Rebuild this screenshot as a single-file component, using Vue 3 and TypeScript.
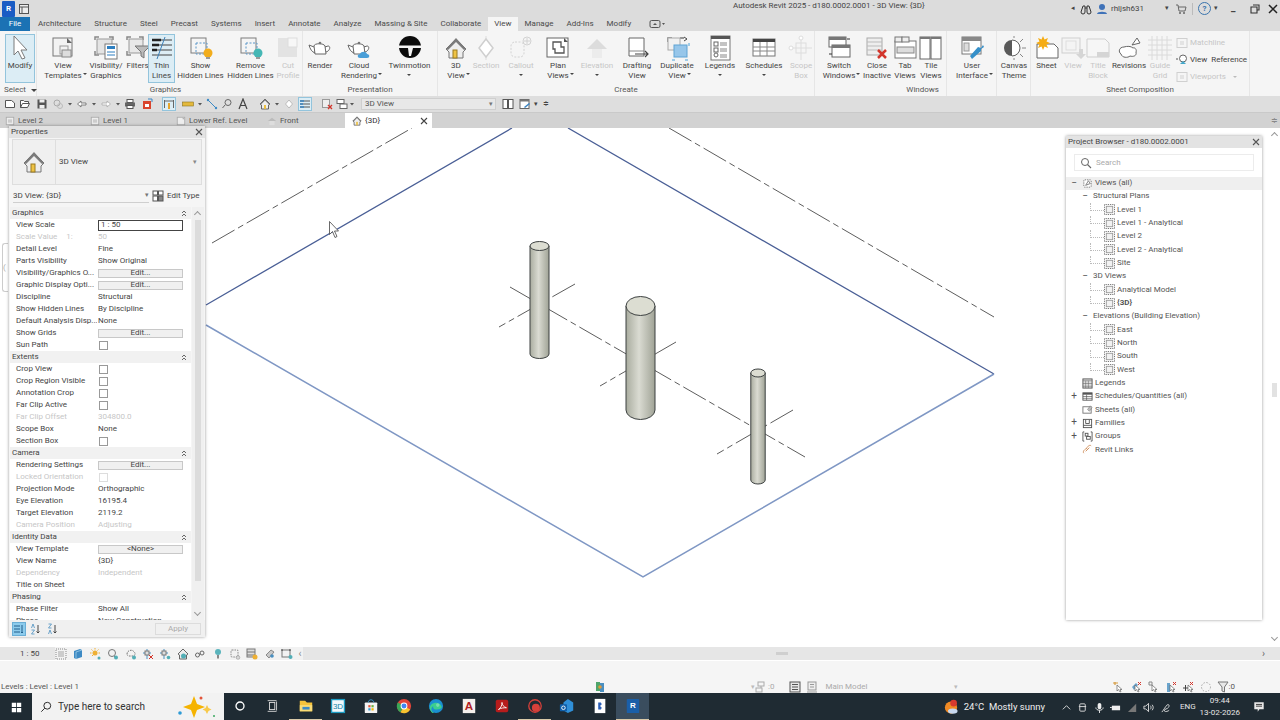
<template>
  <div class="app">
    <header class="title-bar">
      <div class="app-btn">R</div>
      <svg class="qi doc-ic" viewBox="0 0 12 12" v-html="smallIcons.recent"></svg>
      <span class="title">Autodesk Revit 2025 - d180.0002.0001 - 3D View: {3D}</span>
      <div class="title-right">
        <span class="tiny-left">◂</span>
        <svg class="qi" style="margin-left: 5px" viewBox="0 0 12 12" v-html="smallIcons.binoculars"></svg>
        <svg class="qi" style="margin-left: 4px" viewBox="0 0 12 12" v-html="smallIcons.user"></svg>
        <span class="user">rhljsh631</span>
        <span class="tiny-down">▾</span>
        <svg class="qi" style="margin-left: 6px" viewBox="0 0 12 12" v-html="smallIcons.cart"></svg>
        <i class="title-sep"></i>
        <span class="help">?</span>
        <span class="tiny-down help-caret">▾</span>
        <span class="win-btn">_</span>
        <svg class="win-ic" viewBox="0 0 12 12"><path d="M4 2h6v5H8M2 4h6v6H2z" fill="none" stroke="#333" stroke-width="1.1" /></svg>
        <svg class="win-ic" viewBox="0 0 12 12"><path d="M2 2l8 8M10 2l-8 8" stroke="#222" stroke-width="1.5" /></svg>
      </div>
    </header>

    <nav class="menu-bar">
      <span class="menu-file">File</span>
      <span v-for="m in menus" :key="m" class="menu-item" :class="{ active: m === 'View' }">{{ m }}</span>
      <svg class="menu-ic" viewBox="0 0 16 10"><rect x="1" y="1.5" width="10" height="7" rx="1.5" fill="none" stroke="#555" /><path d="M4 6l2-2 2 2z" fill="#555" /><path d="M13 4h3l-1.5 2z" fill="#555" /></svg>
    </nav>

    <section class="ribbon">
      <div v-for="g in groups" :key="g.name + g.width" class="group" :style="{ width: g.width + 'px' }">
        <div class="tools" :style="{ paddingLeft: (g.inset ?? 0) + 'px' }">
          <div
            v-for="t in g.tools"
            :key="t.label.join()"
            class="tool"
            :class="{ off: t.off, on: t.on }"
            :style="{ width: t.width + 'px' }"
          >
            <svg class="tool-ic" viewBox="0 0 26 26" v-html="icons[t.icon]"></svg>
            <div class="tool-label">
              <span v-for="(line, i) in t.label" :key="i">{{ line }}<i v-if="t.side && i === t.label.length - 1" class="caret side"></i></span>
              <i v-if="t.below" class="caret below"></i>
            </div>
          </div>
          <div v-if="g.side" class="side-col">
            <div class="side-row off"><svg class="qi" viewBox="0 0 12 12" v-html="smallIcons.match"></svg>Matchline</div>
            <div class="side-row"><svg class="qi" viewBox="0 0 12 12" v-html="smallIcons.viewref"></svg>View&nbsp; Reference</div>
            <div class="side-row off"><svg class="qi" viewBox="0 0 12 12" v-html="smallIcons.match"></svg>Viewports<i class="caret side-inline"></i></div>
          </div>
        </div>
        <div class="group-label" :class="{ end: g.end, launch: g.launch }">
          {{ g.name }}<i v-if="g.caret" class="caret select-caret"></i>
        </div>
      </div>
    </section>

    <div class="qat">
      <template v-for="q in qat" :key="q.x">
        <svg class="qi" :class="{ 'qi-on': q.on }" :style="{ marginLeft: q.gap + 'px' }" viewBox="0 0 12 12" v-html="smallIcons[q.icon]"></svg>
      </template>
      <div class="qat-combo">3D View<span class="combo-arrow">▾</span></div>
      <svg class="qi" style="margin-left: 6px" viewBox="0 0 12 12" v-html="smallIcons.split"></svg>
      <svg class="qi" style="margin-left: 5px" viewBox="0 0 12 12" v-html="smallIcons.table"></svg>
      <span class="tiny-down qat-caret">▾</span>
      <span class="tiny-down qat-more">≑</span>
    </div>

    <div class="view-tabs">
      <div
        v-for="t in viewTabs"
        :key="t.label"
        class="view-tab"
        :class="{ active: t.active }"
        :style="{ width: t.width + 'px' }"
      >
        <svg class="tab-ic" viewBox="0 0 12 12" v-html="t.active ? smallIcons.home : smallIcons[t.icon]"></svg>
        <span>{{ t.label }}</span>
        <svg v-if="t.active" class="tab-x" viewBox="0 0 10 10"><path d="M2 2l6 6M8 2l-6 6" stroke="#444" stroke-width="1.1" /></svg>
      </div>
      <span class="tabs-more">≑</span>
    </div>

    <main class="canvas">
      <svg class="scene" viewBox="0 128 1280 517">
        <defs>
          <linearGradient id="col" x1="0" x2="1" y1="0" y2="0">
            <stop offset="0" stop-color="#a9ac9f" />
            <stop offset="0.45" stop-color="#dadbd2" />
            <stop offset="1" stop-color="#a0a396" />
          </linearGradient>
        </defs>
        <g stroke="#333" stroke-width="0.8" fill="none" stroke-dasharray="26 4 6 4">
          <path d="M212 243L412 128" />
          <path d="M669 128L994 317" />
          <path d="M510 287L805 457" />
          <path d="M575 284L499 327" />
          <path d="M676 342L600 386" />
          <path d="M793 410L717 454" />
        </g>
        <g fill="none" stroke-width="1.3">
          <path d="M206 305L512 128M568 128L994 374" stroke="#4a5f96" />
          <path d="M994 374L643 577L206 325" stroke="#7f97c4" stroke-width="1.5" />
        </g>
        <g v-for="c in columns" :key="c.x" stroke="#3c4040" stroke-width="1">
          <path :d="columnPath(c)" fill="url(#col)" />
          <ellipse :cx="c.x" :cy="c.top" :rx="c.rx" :ry="c.ry" fill="#dcddd2" />
        </g>
        <path d="M329.500 221.500v13l3-3 2.500 6 2-1-2.500-5.500h4z" fill="#fff" stroke="#444" stroke-width="0.8" />
      </svg>

      <div class="dock-tab"><span>(</span></div>

      <aside class="props">
        <div class="panel-head">
          <span>Properties</span>
          <svg class="panel-x" viewBox="0 0 10 10"><path d="M2 2l6 6M8 2l-6 6" stroke="#555" stroke-width="1.1" /></svg>
        </div>
        <div class="type-box">
          <div class="type-thumb"><svg viewBox="0 0 26 26" v-html="icons.house"></svg></div>
          <span class="type-name">3D View</span>
          <span class="type-arrow">▾</span>
        </div>
        <div class="type-row">
          <div class="type-select">3D View: {3D}<span class="type-select-arrow">▾</span></div>
          <svg class="qi" viewBox="0 0 12 12" v-html="smallIcons.editType"></svg>
          <span class="edit-type">Edit Type</span>
        </div>
        <div class="prop-body">
          <div class="prop-table">
            <template v-for="g in propGroups" :key="g.name">
              <div class="prop-group">
                {{ g.name }}
                <svg class="collapse" viewBox="0 0 6 7"><path d="M1 3l2-2 2 2M1 6l2-2 2 2" fill="none" stroke="#444" stroke-width="0.8" /></svg>
              </div>
              <div v-for="r in g.rows" :key="r.label" class="prop-row" :class="{ off: r.off }">
                <span class="prop-label">{{ r.label }}<em v-if="r.extra">{{ r.extra }}</em></span>
                <span class="prop-value">
                  <span v-if="r.kind === 'edit'" class="edit-btn">{{ r.value }}</span>
                  <span v-else-if="r.kind === 'input'" class="prop-input">{{ r.value }}</span>
                  <i v-else-if="r.kind === 'check'" class="check"></i>
                  <template v-else>{{ r.value }}</template>
                </span>
              </div>
            </template>
          </div>
          <div class="prop-scroll">
            <span class="chev up"></span>
            <i class="prop-grip"></i>
            <span class="chev down"></span>
          </div>
        </div>
        <div class="prop-foot">
          <svg class="qi qi-sel" viewBox="0 0 12 12" v-html="smallIcons.sortCat"></svg>
          <svg class="qi foot-ic" viewBox="0 0 12 12" v-html="smallIcons.sortAz"></svg>
          <svg class="qi foot-ic" viewBox="0 0 12 12" v-html="smallIcons.sortZa"></svg>
          <span class="apply">Apply</span>
        </div>
      </aside>

      <aside class="browser">
        <div class="panel-head browser-head">
          <span>Project Browser - d180.0002.0001</span>
          <svg class="panel-x" viewBox="0 0 10 10"><path d="M2 2l6 6M8 2l-6 6" stroke="#555" stroke-width="1.1" /></svg>
        </div>
        <div class="search">
          <svg viewBox="0 0 12 12"><circle cx="5" cy="5" r="3.500" fill="none" stroke="#666" /><path d="M7.500 7.500l3.500 3.500" stroke="#666" stroke-width="1.1" /></svg>
          <span>Search</span>
        </div>
        <div class="tree">
          <div v-for="n in tree" :key="n.text" class="tree-row" :class="[`lvl${n.lvl}`, { hi: n.hi, bold: n.bold }]">
            <i v-if="n.lvl === 2" class="tree-dots" :class="{ last: n.last }"></i>
            <span v-if="n.sign" class="sign">{{ n.sign }}</span>
            <svg v-if="n.icon" class="tree-ic" viewBox="0 0 12 12" v-html="smallIcons[n.icon]"></svg>
            <span class="tree-text">{{ n.text }}</span>
          </div>
        </div>
      </aside>

      <div class="v-scroll">
        <span class="chev up"></span>
        <i class="v-grip"></i>
        <span class="chev down"></span>
      </div>
    </main>

    <div class="view-bar">
      <span class="view-scale">1 : 50</span>
      <div class="view-icons">
        <svg v-for="(b, i) in viewBarIcons" :key="i" class="qi" viewBox="0 0 12 12" v-html="smallIcons[b]"></svg>
        <span class="h-arrow">‹</span>
      </div>
      <i class="h-grip"></i>
      <span class="h-right">›</span>
    </div>

    <div class="status">
      <span class="status-text">Levels : Level : Level 1</span>
      <svg class="qi status-net" viewBox="0 0 12 12" v-html="smallIcons.network"></svg>
      <div class="status-mid">
        <span class="mid-caret">▾</span>
        <svg class="qi" viewBox="0 0 12 12" v-html="smallIcons.worksets"></svg>
        <span class="count">:0</span>
        <svg class="qi mid-a" viewBox="0 0 12 12" v-html="smallIcons.list"></svg>
        <svg class="qi mid-b" viewBox="0 0 12 12" v-html="smallIcons.listOff"></svg>
        <span class="main-model">Main Model</span>
        <span class="mid-caret model-caret">▾</span>
      </div>
      <div class="status-right">
        <svg v-for="(s, i) in statusIcons" :key="i" class="qi" viewBox="0 0 12 12" v-html="smallIcons[s]"></svg>
        <span class="count filter-count">:0</span>
      </div>
    </div>

    <footer class="taskbar">
      <div class="start">
        <svg viewBox="0 0 14 14"><path d="M1 1h5.500v5.500H1zM7.500 1H13v5.500H7.500zM1 7.500h5.500V13H1zM7.500 7.500H13V13H7.500z" fill="#fff" /></svg>
      </div>
      <div class="task-search">
        <svg class="task-glass" viewBox="0 0 14 14"><circle cx="8.500" cy="5.500" r="4" fill="none" stroke="#222" stroke-width="1.1" /><path d="M5.500 8.500L1.500 12.500" stroke="#222" stroke-width="1.1" /></svg>
        <span>Type here to search</span>
        <svg class="sparkle" viewBox="0 0 40 24"><path d="M18 1l3 8 8 3-8 3-3 8-3-8-8-3 8-3z" fill="#f5b301" /><path d="M31 10l1.500 3 3 1.500-3 1.500-1.500 3-1.500-3-3-1.500 3-1.500z" fill="#f7c94b" /><circle cx="25" cy="3" r="1.500" fill="#e2543a" /><circle cx="4" cy="18" r="1.800" fill="#2e9bd6" /><circle cx="38" cy="21" r="1" fill="#3aa860" /></svg>
      </div>
      <div class="task-apps">
        <div v-for="a in taskApps" :key="a.name" class="task-app" :class="{ running: a.running, current: a.current }">
          <svg viewBox="0 0 18 18" v-html="a.svg"></svg>
        </div>
      </div>
      <div class="tray">
        <svg class="weather" viewBox="0 0 16 18"><circle cx="8" cy="9" r="7" fill="#f08a24" /><ellipse cx="10" cy="13" rx="5.500" ry="3" fill="#c8d8ee" /><circle cx="11" cy="4" r="3.800" fill="#d73a2e" /></svg>
        <span class="temp">24°C&nbsp; Mostly sunny</span>
        <svg class="tray-ic first" viewBox="0 0 12 12"><path d="M2 8l4-4 4 4" fill="none" stroke="#ddd" /></svg>
        <svg v-for="(t, i) in trayIcons" :key="i" class="tray-ic" viewBox="0 0 12 12" v-html="t"></svg>
        <span class="lang">ENG</span>
        <div class="clock"><span>09:44</span><span>13-02-2026</span></div>
        <svg class="notify" viewBox="0 0 14 14"><path d="M1.500 1.500h11v8h-5l-2 3v-3h-4z" fill="#e8e8e8" /><path d="M3.500 4h7M3.500 6h7" stroke="#222" /></svg>
      </div>
    </footer>
  </div>
</template>

<script setup lang="ts">
type Tool = {
  label: string[];
  icon: string;
  width: number;
  off?: boolean;
  on?: boolean;
  side?: boolean;
  below?: boolean;
};

type Group = {
  name: string;
  width: number;
  tools: Tool[];
  inset?: number;
  end?: boolean;
  launch?: boolean;
  caret?: boolean;
  side?: boolean;
};

type PropRow = {
  label: string;
  value?: string;
  kind?: "edit" | "input" | "check";
  off?: boolean;
  extra?: string;
};

const menus = [
  "Architecture",
  "Structure",
  "Steel",
  "Precast",
  "Systems",
  "Insert",
  "Annotate",
  "Analyze",
  "Massing & Site",
  "Collaborate",
  "View",
  "Manage",
  "Add-Ins",
  "Modify",
];

const frame = (x: number, y: number, w: number, h: number, c = "#7d7d7d") =>
  `<rect x="${x}" y="${y}" width="${w}" height="${h}" fill="none" stroke="${c}"/>`;
const teapot =
  '<path d="M7 11c0-3 10-3 11 0l1 8H8zM7 12L2 10c1 4 3 7 6 8M18 12l3-1c3 0 2 5-2 6" fill="#fff" stroke="#666"/><circle cx="13" cy="8" r="1.300" fill="#777"/>';

const icons: Record<string, string> = {
  modify: '<path d="M7 1v19l4-4 4 8 3-1-4-8h6z" fill="#fff" stroke="#7a7a7a"/>',
  templates: `<rect x="3" y="3" width="19" height="18" fill="#f2f2f2" stroke="#777"/><path d="M17 3l5 5h-5z" fill="#666"/>${frame(10, 11, 8, 8, "#999")}<rect x="12" y="15" width="9" height="7" fill="#ddd" stroke="#888"/>`,
  visibility: `<path d="M2 5V2h4M16 2h4v3M2 16v4h4" fill="none" stroke="#888" stroke-width="1.500"/><rect x="4" y="4" width="15" height="15" fill="#e4e4e4" stroke="#999"/><rect x="12" y="9" width="12" height="15" fill="#fff" stroke="#777"/><rect x="14" y="11" width="8" height="3" fill="#2d7fc1"/><path d="M14 17h8M14 20h8" stroke="#2d7fc1"/>`,
  filters: `<path d="M2 5V2h4M14 2h4v3M2 16v4h4" fill="none" stroke="#888" stroke-width="1.500"/><rect x="4" y="4" width="14" height="14" fill="#e8e8e8" stroke="#999"/><path d="M10 11h15l-6 6v6l-3-2v-4z" fill="#bbb" stroke="#777"/>`,
  thin: '<path d="M3 5h20M3 10h20M3 15h20M3 20h20" stroke="#444" stroke-width="1.200"/><path d="M3 5h9M3 10h7M3 15h5" stroke="#222" stroke-width="2.500"/><path d="M16 2L8 24" stroke="#3b80b8"/>',
  showHidden: `${frame(3, 3, 15, 15)}<rect x="8" y="8" width="11" height="11" fill="none" stroke="#5a96c8" stroke-dasharray="2 1.500"/><circle cx="20" cy="18" r="4.500" fill="#f2ad1c"/><rect x="18" y="22" width="4" height="2" fill="#999"/>`,
  removeHidden: `${frame(3, 3, 15, 15)}<rect x="8" y="8" width="11" height="11" fill="none" stroke="#5a96c8" stroke-dasharray="2 1.500"/><circle cx="20" cy="18" r="4.500" fill="#45b7b5"/><rect x="18" y="22" width="4" height="2" fill="#999"/>`,
  cut: '<rect x="3" y="3" width="19" height="19" fill="#e3e3e3"/><rect x="13" y="3" width="9" height="9" fill="#f7f7f7" stroke="#ddd"/>',
  render: teapot,
  cloud: `${teapot}<path d="M14 23c-3 0-3-4 0-4 1-3 6-3 7 0 3 0 3 4 0 4z" fill="#4a9fd8"/>`,
  twin: '<circle cx="13" cy="12" r="11" fill="#0c0c0c"/><path d="M2 10.500h22v2.500H16l-2 8h-2l-1-8H2z" fill="#f5f5f5"/>',
  house: '<path d="M3 14L13 4l10 10-3 3v6H6v-6z" fill="#eee" stroke="#777"/><path d="M3 14L13 3l10 11-2 1-8-8-8 8z" fill="#7b7b7b"/><rect x="10" y="15" width="4" height="8" fill="#efc344" stroke="#9a7a20"/>',
  section: '<path d="M13 1v24" stroke="#ddd"/><path d="M13 4l7 9-7 9-7-9z" fill="#fff" stroke="#cfcfcf" stroke-width="1.500"/>',
  callout: '<rect x="3" y="7" width="13" height="15" rx="4" fill="none" stroke="#d2d2d2" stroke-dasharray="2 1.500"/><circle cx="19" cy="6" r="4" fill="none" stroke="#d2d2d2"/><path d="M19 3v6M16 6h6" stroke="#d2d2d2"/>',
  plan: '<rect x="2" y="3" width="21" height="19" fill="#fff" stroke="#666"/><path d="M19 3l4 4h-4z" fill="#555"/><path d="M8 7h8v5h3v6H10v-4H8z" fill="none" stroke="#555" stroke-width="1.300"/>',
  elevation: '<path d="M3 14L13 4l10 10z" fill="#dcdcdc"/><rect x="8" y="14" width="10" height="9" fill="#ececec"/>',
  drafting: '<path d="M5 3h15v18H5z" fill="#fff" stroke="#666"/><path d="M5 16h15" stroke="#888"/><path d="M11 19h13M21 16l3 3-3 3" fill="none" stroke="#444" stroke-width="1.200"/>',
  duplicate: '<path d="M4 7V3h4M16 3h4" fill="none" stroke="#777" stroke-width="1.500"/><rect x="4" y="3" width="12" height="12" fill="#f1f1f1" stroke="#aaa"/><rect x="10" y="10" width="13" height="12" fill="#96c6ea" stroke="#5fa3d4"/><path d="M8 25h3M21 25h3M25 8v3" stroke="#4da3d9"/><path d="M20 2l3 2-3 2" fill="none" stroke="#444"/>',
  legends: '<rect x="4" y="1" width="19" height="24" fill="#fff" stroke="#777"/><rect x="4" y="1" width="19" height="3" fill="#555"/><rect x="7" y="7" width="4" height="4" fill="none" stroke="#666"/><rect x="7" y="13" width="4" height="4" fill="none" stroke="#666"/><circle cx="9" cy="20" r="2" fill="none" stroke="#666"/><path d="M13 8h7M13 10h7M13 14h7M13 16h7M13 20h7M13 22h7" stroke="#888"/>',
  schedules: '<rect x="2" y="4" width="22" height="17" fill="#fff" stroke="#777"/><rect x="2" y="4" width="22" height="3" fill="#444"/><path d="M2 12h22M2 16h22M9 7v14M16 7v14" stroke="#888"/>',
  scope: '<path d="M13 1v24M2 13h22" stroke="#ddd"/><circle cx="13" cy="3" r="2" fill="#fff" stroke="#ddd"/><circle cx="3" cy="13" r="2" fill="#fff" stroke="#ddd"/><rect x="8" y="8" width="10" height="10" fill="none" stroke="#ddd"/>',
  switchWin: '<rect x="3" y="2" width="17" height="10" fill="#fff" stroke="#666"/><rect x="3" y="2" width="17" height="3" fill="#777"/><rect x="6" y="10" width="18" height="12" fill="#fff" stroke="#666"/><rect x="6" y="10" width="18" height="3" fill="#777"/><path d="M21 4h3M3 19h3" stroke="#333"/>',
  close: '<rect x="3" y="3" width="15" height="17" fill="#eee" stroke="#aaa"/><path d="M3 7h15M3 11h15M3 15h15" stroke="#bbb"/><path d="M14 15l8 8M22 15l-8 8" stroke="#d2352b" stroke-width="2.500"/>',
  tab: '<rect x="3" y="6" width="21" height="17" fill="#fff" stroke="#777"/><rect x="3" y="2" width="7" height="5" fill="#eee" stroke="#777"/><rect x="10" y="2" width="7" height="5" fill="#eee" stroke="#777"/><rect x="5" y="12" width="17" height="6" fill="#ddd" stroke="#888"/>',
  tile: '<rect x="2" y="2" width="10" height="22" fill="#fff" stroke="#666"/><rect x="13" y="2" width="10" height="22" fill="#fff" stroke="#666"/><rect x="2" y="2" width="10" height="2" fill="#777"/><rect x="13" y="2" width="10" height="2" fill="#777"/>',
  ui: '<rect x="3" y="2" width="19" height="17" fill="#fff" stroke="#777"/><rect x="3" y="2" width="19" height="4" fill="#888"/><rect x="5" y="8" width="5" height="8" fill="#ddd" stroke="#999"/><path d="M24 10l-2 3-3-1-8 9 2 3 9-8 0-2 3-2z" fill="#3690c9"/>',
  canvasTheme: '<circle cx="11" cy="13" r="8" fill="#595959"/><path d="M11 5a8 8 0 010 16" fill="#fff" stroke="#666"/><path d="M21 13h4M19 7l3-3M19 19l3 3M13 1v2M13 23v2" stroke="#888"/>',
  sheet: '<path d="M3 9h17l4 4v10H3z" fill="#fff" stroke="#666"/><path d="M9 1l1.500 3.500L14 3l-1.500 3.500L16 8l-3.500 1.500L14 13l-3.500-1.500L9 15l-1.500-3.500L4 13l1.500-3.500L2 8l3.500-1.500L4 3l3.500 1.500z" fill="#f5ac13"/>',
  viewOff: '<rect x="2" y="3" width="18" height="15" fill="#f4f4f4" stroke="#cfcfcf"/><rect x="6" y="6" width="10" height="9" fill="none" stroke="#ddd"/><path d="M19 14v5h-3l5 5 5-5h-3v-5z" fill="#d5d5d5"/>',
  titleBlock: '<path d="M2 4h18l4 4v14H2z" fill="#f6f6f6" stroke="#cfcfcf"/><rect x="12" y="17" width="12" height="5" fill="#d5d5d5"/>',
  revisions: '<path d="M8 12c-5 0-6 5-3 7 1 4 7 4 9 2 3 1 7 0 6-4 1-2-1-5-3-4-2-2-6-2-9-1z" fill="#fff" stroke="#666"/><path d="M16 10l5-7 3 5z" fill="#fff" stroke="#666"/>',
  grid: '<path d="M5 1v24M10 1v24M15 1v24M20 1v24M1 5h24M1 10h24M1 15h24M1 20h24" stroke="#dadada"/>',
};

const groups: Group[] = [
  {
    name: "Select",
    width: 37,
    inset: 5,
    caret: true,
    tools: [{ label: ["Modify"], icon: "modify", width: 30, on: true }],
  },
  {
    name: "Graphics",
    width: 266,
    inset: 4,
    launch: true,
    tools: [
      { label: ["View", "Templates"], icon: "templates", width: 44, side: true },
      { label: ["Visibility/", "Graphics"], icon: "visibility", width: 42 },
      { label: ["Filters"], icon: "filters", width: 21 },
      { label: ["Thin", "Lines"], icon: "thin", width: 27, on: true },
      { label: ["Show", "Hidden Lines"], icon: "showHidden", width: 51 },
      { label: ["Remove", "Hidden Lines"], icon: "removeHidden", width: 49 },
      { label: ["Cut", "Profile"], icon: "cut", width: 26, off: true },
    ],
  },
  {
    name: "Presentation",
    width: 135,
    tools: [
      { label: ["Render"], icon: "render", width: 34 },
      { label: ["Cloud", "Rendering"], icon: "cloud", width: 44, side: true },
      { label: ["Twinmotion"], icon: "twin", width: 57, below: true },
    ],
  },
  {
    name: "Create",
    width: 377,
    tools: [
      { label: ["3D", "View"], icon: "house", width: 36, side: true },
      { label: ["Section"], icon: "section", width: 24, off: true },
      { label: ["Callout"], icon: "callout", width: 46, off: true, below: true },
      { label: ["Plan", "Views"], icon: "plan", width: 28, side: true },
      { label: ["Elevation"], icon: "elevation", width: 50, off: true, below: true },
      { label: ["Drafting", "View"], icon: "drafting", width: 30 },
      { label: ["Duplicate", "View"], icon: "duplicate", width: 50, side: true },
      { label: ["Legends"], icon: "legends", width: 36, below: true },
      { label: ["Schedules"], icon: "schedules", width: 52, below: true },
      { label: ["Scope", "Box"], icon: "scope", width: 22, off: true },
    ],
  },
  {
    name: "Windows",
    width: 132,
    end: true,
    tools: [
      { label: ["Switch", "Windows"], icon: "switchWin", width: 48, side: true },
      { label: ["Close", "Inactive"], icon: "close", width: 28 },
      { label: ["Tab", "Views"], icon: "tab", width: 28 },
      { label: ["Tile", "Views"], icon: "tile", width: 24 },
    ],
  },
  {
    name: "",
    width: 50,
    tools: [{ label: ["User", "Interface"], icon: "ui", width: 50, side: true }],
  },
  {
    name: " ",
    width: 34,
    tools: [{ label: ["Canvas", "Theme"], icon: "canvasTheme", width: 34 }],
  },
  {
    name: "Sheet Composition",
    width: 219,
    side: true,
    tools: [
      { label: ["Sheet"], icon: "sheet", width: 31 },
      { label: ["View"], icon: "viewOff", width: 22, off: true },
      { label: ["Title", "Block"], icon: "titleBlock", width: 28, off: true },
      { label: ["Revisions"], icon: "revisions", width: 34 },
      { label: ["Guide", "Grid"], icon: "grid", width: 28, off: true },
    ],
  },
];

const smallIcons: Record<string, string> = {
  recent: '<rect x="1.500" y="1.500" width="9" height="9" fill="#eee" stroke="#555"/><path d="M1.500 4h9M4 4v6.500" stroke="#555"/>',
  binoculars: '<path d="M1 9a2 2 0 004 0V3H3zM7 3v6a2 2 0 004 0L9 3zM5 5h2" fill="none" stroke="#333"/>',
  user: '<circle cx="6" cy="4" r="3" fill="#3f72b8"/><path d="M1 11c0-3 10-3 10 0z" fill="#3f72b8"/>',
  cart: '<path d="M1 2h2l1 6h6l1-4H3.500" fill="none" stroke="#666"/><circle cx="5" cy="10" r="1" fill="#666"/><circle cx="9" cy="10" r="1" fill="#666"/>',
  match: '<rect x="1" y="1.500" width="10" height="9" fill="none" stroke="#d0d0d0"/><path d="M4 4h4v4H4z" fill="#e3e3e3"/>',
  viewref: '<circle cx="7" cy="4.500" r="3.500" fill="#fff" stroke="#666"/><path d="M4 10l3-3 3 3z" fill="#45a7c9"/><path d="M0 5h2" stroke="#555"/>',
  new: '<path d="M1.500 2.500h6l3 2.500v4.500h-9z" fill="#fff" stroke="#555"/>',
  open: '<path d="M1.500 9.500v-7h3l1 1h4v2M1.500 9.500l2-4h7l-2 4z" fill="#fff" stroke="#555"/>',
  save: '<path d="M1.500 1.500h8l1 1v8h-9z" fill="#555"/><rect x="3.500" y="1.500" width="5" height="3" fill="#eee"/><rect x="3.500" y="7" width="5" height="3.500" fill="#eee"/>',
  sync: '<circle cx="5" cy="5" r="3" fill="none" stroke="#aaa"/><circle cx="8" cy="8" r="2.500" fill="none" stroke="#bbb"/>',
  caret: '<path d="M4 5h4L6 7.500z" fill="#555"/>',
  undo: '<path d="M1.500 6l3.500-3v2h5v2H5v2z" fill="#fff" stroke="#666" stroke-width="0.800"/>',
  redo: '<path d="M10.500 6L7 3v2H2v2h5v2z" fill="#fff" stroke="#aaa" stroke-width="0.800"/>',
  print: '<rect x="3" y="1.500" width="6" height="3" fill="#fff" stroke="#555"/><rect x="1" y="4.500" width="10" height="4" fill="#666"/><rect x="3" y="7.500" width="6" height="3" fill="#fff" stroke="#555"/>',
  sheetRed: '<rect x="2" y="3" width="8" height="8" fill="#d9452d"/><rect x="4" y="6" width="4" height="3" fill="#fff"/><path d="M7 1h4v3" fill="none" stroke="#3b86c4"/>',
  thinSel: '<path d="M1.500 2v8M10.500 2v8M1.500 3h9" stroke="#666"/><path d="M6 5v6" stroke="#e8a52c" stroke-width="2"/>',
  measure: '<rect x="0.500" y="4" width="11" height="4" fill="#e4b93c" stroke="#8a7220" stroke-width="0.600"/>',
  align: '<path d="M2 2l8 8" stroke="#3d8ac4"/><circle cx="2" cy="2" r="1.200" fill="#3d8ac4"/><circle cx="10" cy="10" r="1.200" fill="#3d8ac4"/>',
  tag: '<circle cx="7" cy="4.500" r="3" fill="none" stroke="#666"/><path d="M4 7l-2.500 3" stroke="#666"/>',
  textA: '<path d="M2 11L6 1l4 10M3.500 7.500h5" fill="none" stroke="#444" stroke-width="1.200"/>',
  home: '<path d="M1 6l5-5 5 5-1.500 1V11h-7V7z" fill="#eee" stroke="#666"/><path d="M1 6l5-5 5 5-1 .5-4-4-4 4z" fill="#777"/><rect x="5" y="7" width="2" height="4" fill="#ebc043"/>',
  section: '<path d="M6 2l3.500 4L6 10 2.500 6z" fill="#fff" stroke="#bbb"/>',
  thinOn: '<path d="M1 3h10M1 6h10M1 9h10" stroke="#555"/><path d="M1 3h4M1 6h3M1 9h4" stroke="#3b86c4" stroke-width="1.500"/>',
  closeHidden: '<rect x="1.500" y="1.500" width="7" height="8" fill="#eee" stroke="#999"/><path d="M7 7l4 4M11 7l-4 4" stroke="#d2352b" stroke-width="1.300"/>',
  switchSmall: '<rect x="1" y="1.500" width="7" height="4" fill="#fff" stroke="#666"/><rect x="4" y="6" width="7" height="4.500" fill="#fff" stroke="#666"/>',
  split: '<rect x="1" y="1.500" width="4.500" height="9" fill="#fff" stroke="#555"/><rect x="6.500" y="1.500" width="4.500" height="9" fill="#fff" stroke="#555"/>',
  table: '<rect x="1" y="1.500" width="9" height="9" fill="#fff" stroke="#666"/><rect x="1" y="1.500" width="9" height="2" fill="#777"/><path d="M5 9l5-4 1 1-5 4z" fill="#3b86c4"/>',
  plan: '<rect x="1.500" y="1.500" width="9" height="9" fill="#eee" stroke="#aaa"/><path d="M3.500 4h5v4h-5z" fill="#ccc"/>',
  lowerRef: '<rect x="1.500" y="1.500" width="9" height="9" fill="#eee" stroke="#aaa"/><path d="M8 1.500l2.500 2.500H8z" fill="#aaa"/>',
  front: '<path d="M1 6l5-4 5 4z" fill="#bbb"/><rect x="3" y="6" width="6" height="5" fill="#ddd"/>',
  editType: '<rect x="1" y="1" width="4.500" height="4" fill="#fff" stroke="#555"/><rect x="6.500" y="1" width="4.500" height="4" fill="#fff" stroke="#555"/><rect x="1" y="6" width="4.500" height="5" fill="#fff" stroke="#555"/><rect x="6.500" y="6" width="4.500" height="5" fill="#888" stroke="#555"/>',
  sortCat: '<path d="M1 3h6M1 6h6M1 9h6" stroke="#225f8c"/><path d="M9 2v8M8 9l1 1 1-1" fill="none" stroke="#225f8c"/>',
  sortAz: '<path d="M1.500 5l1.500-4 1.500 4M1.500 7h3l-3 4h3" fill="none" stroke="#4a8fc0" stroke-width="0.800"/><path d="M8 2v8M6.500 8.500L8 10l1.500-1.500" fill="none" stroke="#444"/>',
  sortZa: '<path d="M1.500 1h3l-3 4h3M1.500 11l1.500-4 1.500 4" fill="none" stroke="#4a8fc0" stroke-width="0.800"/><path d="M8 2v8M6.500 8.500L8 10l1.500-1.500" fill="none" stroke="#444"/>',
  views: '<rect x="2" y="2" width="8" height="8" rx="1" fill="#fff" stroke="#777" stroke-dasharray="1.500 1"/><path d="M4 8l3-5 2 3z" fill="none" stroke="#777"/>',
  thumb: '<rect x="0.500" y="0.500" width="11" height="11" fill="#fff" stroke="#555" stroke-dasharray="1 1"/><rect x="2.500" y="2.500" width="7" height="7" fill="#f2f2f2" stroke="#999"/>',
  legends: '<rect x="1" y="1" width="10" height="10" fill="#ddd" stroke="#555"/><path d="M1 3h10M4 3v8M7 3v8M1 6h10M1 9h10" stroke="#666" stroke-width="0.600"/>',
  schedules: '<rect x="1" y="2" width="10" height="8" fill="#fff" stroke="#555"/><rect x="1" y="2" width="10" height="2" fill="#555"/><path d="M1 6h10M1 8h10M5 4v6" stroke="#555" stroke-width="0.700"/>',
  sheets: '<rect x="1" y="3" width="9" height="7" fill="#fff" stroke="#777"/><path d="M6 6l3-4 2 2-3 4z" fill="#bbb" stroke="#666" stroke-width="0.500"/>',
  families: '<rect x="1.500" y="1.500" width="9" height="9" fill="#fff" stroke="#555"/><path d="M4 2v4h4V2M1.500 8h9" fill="none" stroke="#555"/>',
  groups: '<path d="M2.500 1H1v10h1.500M9.500 1H11v10H9.500" fill="none" stroke="#555"/><rect x="3.500" y="2.500" width="3" height="3" fill="none" stroke="#555"/><rect x="5" y="6" width="4" height="3" fill="none" stroke="#555"/>',
  link: '<path d="M2 10c-2-2 2-5 3-5l1 1M10 2C8 0 5 4 5 5l1 1M4 8l4-4" fill="none" stroke="#cf8c58"/>',
  crop: '<rect x="1" y="1" width="10" height="10" fill="none" stroke="#888" stroke-dasharray="1 1"/><rect x="3" y="3" width="6" height="6" fill="#ccc"/>',
  cube: '<path d="M2 3l6-2 2 1v7l-6 2-2-1z" fill="#3d8ac4"/><path d="M4 4v7M4 4l6-2" stroke="#bfe0f2" stroke-width="0.600"/>',
  sun: '<circle cx="5" cy="5" r="2.500" fill="#eeb034"/><path d="M5 0v1.500M0 5h1.500M8.500 5H10M1.500 1.500l1 1M8.500 1.500l-1 1M2 8l1-1" stroke="#eeb034"/><circle cx="9" cy="10" r="1.500" fill="#52aeb6"/>',
  lens: '<circle cx="5" cy="5" r="3.500" fill="none" stroke="#777"/><path d="M7 8l2 2" stroke="#777"/><circle cx="9" cy="9.500" r="2" fill="#52aeb6"/>',
  cloudCrop: '<path d="M2 6c0-4 6-5 7-2 2 1 1 4-1 4H4C3 8 2 7 2 6z" fill="none" stroke="#777" stroke-dasharray="1.500 1"/><circle cx="9" cy="9.500" r="2" fill="#52aeb6"/>',
  unlockX: '<path d="M5 1v10M1 5h8" stroke="#4a8fc0"/><rect x="3" y="3" width="4" height="4" fill="#ddd" stroke="#777"/><path d="M7 7l4 4M11 7l-4 4" stroke="#d2352b"/>',
  unlockA: '<path d="M5 1v10M1 5h8" stroke="#4a8fc0"/><rect x="3" y="3" width="4" height="4" fill="#ddd" stroke="#777"/><circle cx="9.500" cy="9.500" r="1.800" fill="#52aeb6"/>',
  homeTeal: '<path d="M1 6l5-5 5 5-1.500 1V11h-7V7z" fill="#eee" stroke="#666"/><circle cx="6.500" cy="8" r="2.500" fill="#52aeb6"/>',
  glasses: '<circle cx="3.500" cy="7" r="2" fill="none" stroke="#666"/><circle cx="8" cy="5" r="2" fill="none" stroke="#666"/><path d="M5.500 6l1-.5" stroke="#666"/>',
  bulb: '<circle cx="6" cy="4" r="3" fill="#5ab4bc"/><rect x="5" y="7" width="2" height="3.500" fill="#888"/>',
  hidden: '<rect x="2" y="2" width="7" height="7" rx="1" fill="none" stroke="#888" stroke-dasharray="1.500 1"/><circle cx="9" cy="9.500" r="1.800" fill="#d8d8d8" stroke="#888" stroke-width="0.500"/>',
  analytic: '<rect x="1" y="1" width="8" height="8" fill="#ddd" stroke="#777"/><path d="M1 4h8M1 7h8" stroke="#777"/><circle cx="9" cy="9" r="2.500" fill="#eeb034"/>',
  pipes: '<path d="M2 7l5-5 3 2-5 6z" fill="#c8c8c8" stroke="#666" stroke-width="0.700"/><circle cx="8" cy="8" r="1.800" fill="#4a8fc0"/>',
  frameTeal: '<rect x="1" y="2" width="8" height="7" fill="none" stroke="#777"/><path d="M1 1v2M9 1v2" stroke="#444"/><circle cx="9.500" cy="9" r="2" fill="#52aeb6"/>',
  network: '<rect x="2" y="1" width="4" height="9" fill="#4fa56b"/><rect x="6" y="2" width="4" height="9" fill="#4a8fc0"/><circle cx="6" cy="6" r="1.800" fill="#e29a3a"/>',
  worksets: '<rect x="3" y="1" width="6" height="4" fill="none" stroke="#aaa"/><rect x="1" y="7" width="6" height="4" fill="none" stroke="#aaa"/><path d="M6 5v2" stroke="#aaa"/>',
  list: '<rect x="1" y="1" width="10" height="10" fill="#e8e8e8" stroke="#555"/><path d="M3 3.500h6M3 6h6M3 8.500h6" stroke="#555"/>',
  listOff: '<rect x="2" y="1" width="8" height="8" fill="#eee" stroke="#999"/><path d="M4 3.500h4M4 6h4M1 11h10" stroke="#999"/>',
  pick1: '<path d="M1 2h5M3 1v3" stroke="#d59b40" stroke-width="1.200"/><path d="M5 4v6l1.500-1.500L8 11l1-.5-1-2h2z" fill="#fff" stroke="#666" stroke-width="0.700"/>',
  pick2: '<path d="M2 6l4-4 2 2-4 5z" fill="#6aa4cc"/><path d="M5 4v6l1.500-1.500L8 11l1-.5-1-2h2z" fill="#fff" stroke="#666" stroke-width="0.700"/><path d="M8 1l3 3M11 1L8 4" stroke="#d2352b"/>',
  pick3: '<path d="M2 1h3v3H2z" fill="none" stroke="#888"/><path d="M5 4v6l1.500-1.500L8 11l1-.5-1-2h2z" fill="#fff" stroke="#666" stroke-width="0.700"/>',
  pick4: '<rect x="2" y="2" width="3" height="9" fill="#6aa4cc"/><path d="M5 4v6l1.500-1.500L8 11l1-.5-1-2h2z" fill="#fff" stroke="#666" stroke-width="0.700"/><path d="M8 1l3 3M11 1L8 4" stroke="#d2352b"/>',
  pick5: '<path d="M1 7h5M3.500 4v6" stroke="#444"/><path d="M6 4v6l1.500-1.500L9 11l1-.5-1-2h2z" fill="#fff" stroke="#666" stroke-width="0.700"/><path d="M8 1l3 3M11 1L8 4" stroke="#d2352b"/>',
  ring: '<circle cx="6" cy="6" r="4.500" fill="none" stroke="#aaa" stroke-dasharray="1.500 1.500"/>',
  filter: '<path d="M1 1h10L7.500 6v5L5 10V6z" fill="#e8e8e8" stroke="#777"/>',
};

const qat = [
  { x: 1, icon: "new", gap: 4 },
  { x: 2, icon: "open", gap: 3 },
  { x: 3, icon: "save", gap: 5 },
  { x: 4, icon: "sync", gap: 4 },
  { x: 5, icon: "caret", gap: 0 },
  { x: 6, icon: "undo", gap: 0 },
  { x: 7, icon: "caret", gap: 0 },
  { x: 8, icon: "redo", gap: 0 },
  { x: 9, icon: "caret", gap: 0 },
  { x: 10, icon: "print", gap: 0 },
  { x: 11, icon: "sheetRed", gap: 5 },
  { x: 12, icon: "thinSel", gap: 10, on: true },
  { x: 13, icon: "measure", gap: 7 },
  { x: 14, icon: "caret", gap: 0 },
  { x: 15, icon: "align", gap: 0 },
  { x: 16, icon: "tag", gap: 3 },
  { x: 17, icon: "textA", gap: 4 },
  { x: 18, icon: "home", gap: 10 },
  { x: 19, icon: "caret", gap: 0 },
  { x: 20, icon: "section", gap: 0 },
  { x: 21, icon: "thinOn", gap: 4, on: true },
  { x: 22, icon: "closeHidden", gap: 10 },
  { x: 23, icon: "switchSmall", gap: 3 },
  { x: 24, icon: "caret", gap: -2 },
];

const viewTabs = [
  { label: "Level 2", icon: "plan", width: 85 },
  { label: "Level 1", icon: "plan", width: 86 },
  { label: "Lower Ref. Level", icon: "lowerRef", width: 91 },
  { label: "Front", icon: "front", width: 83 },
  { label: "{3D}", icon: "home", width: 87, active: true },
];

const columns = [
  { x: 539.5, rx: 9.5, ry: 4.5, top: 246, bottom: 354 },
  { x: 640.5, rx: 14.5, ry: 9.5, top: 306, bottom: 410 },
  { x: 758, rx: 7.2, ry: 4, top: 373, bottom: 480 },
];

const columnPath = (c: { x: number; rx: number; ry: number; top: number; bottom: number }) => {
  const l = c.x - c.rx;
  const r = c.x + c.rx;
  return `M${l} ${c.top}V${c.bottom}A${c.rx} ${c.ry} 0 0 0 ${r} ${c.bottom}V${c.top}Z`;
};

const propGroups: { name: string; rows: PropRow[] }[] = [
  {
    name: "Graphics",
    rows: [
      { label: "View Scale", value: "1 : 50", kind: "input" },
      { label: "Scale Value", extra: "1:", value: "50", off: true },
      { label: "Detail Level", value: "Fine" },
      { label: "Parts Visibility", value: "Show Original" },
      { label: "Visibility/Graphics O...", value: "Edit...", kind: "edit" },
      { label: "Graphic Display Opti...", value: "Edit...", kind: "edit" },
      { label: "Discipline", value: "Structural" },
      { label: "Show Hidden Lines", value: "By Discipline" },
      { label: "Default Analysis Disp...", value: "None" },
      { label: "Show Grids", value: "Edit...", kind: "edit" },
      { label: "Sun Path", kind: "check" },
    ],
  },
  {
    name: "Extents",
    rows: [
      { label: "Crop View", kind: "check" },
      { label: "Crop Region Visible", kind: "check" },
      { label: "Annotation Crop", kind: "check" },
      { label: "Far Clip Active", kind: "check" },
      { label: "Far Clip Offset", value: "304800.0", off: true },
      { label: "Scope Box", value: "None" },
      { label: "Section Box", kind: "check" },
    ],
  },
  {
    name: "Camera",
    rows: [
      { label: "Rendering Settings", value: "Edit...", kind: "edit" },
      { label: "Locked Orientation", kind: "check", off: true },
      { label: "Projection Mode", value: "Orthographic" },
      { label: "Eye Elevation", value: "16195.4" },
      { label: "Target Elevation", value: "2119.2" },
      { label: "Camera Position", value: "Adjusting", off: true },
    ],
  },
  {
    name: "Identity Data",
    rows: [
      { label: "View Template", value: "<None>", kind: "edit" },
      { label: "View Name", value: "{3D}" },
      { label: "Dependency", value: "Independent", off: true },
      { label: "Title on Sheet", value: "" },
    ],
  },
  {
    name: "Phasing",
    rows: [
      { label: "Phase Filter", value: "Show All" },
      { label: "Phase", value: "New Construction" },
    ],
  },
];

const tree = [
  { lvl: 0, sign: "−", icon: "views", text: "Views (all)", hi: true },
  { lvl: 1, sign: "−", text: "Structural Plans" },
  { lvl: 2, icon: "thumb", text: "Level 1" },
  { lvl: 2, icon: "thumb", text: "Level 1 - Analytical" },
  { lvl: 2, icon: "thumb", text: "Level 2" },
  { lvl: 2, icon: "thumb", text: "Level 2 - Analytical" },
  { lvl: 2, icon: "thumb", text: "Site", last: true },
  { lvl: 1, sign: "−", text: "3D Views" },
  { lvl: 2, icon: "thumb", text: "Analytical Model" },
  { lvl: 2, icon: "thumb", text: "{3D}", bold: true, last: true },
  { lvl: 1, sign: "−", text: "Elevations (Building Elevation)" },
  { lvl: 2, icon: "thumb", text: "East" },
  { lvl: 2, icon: "thumb", text: "North" },
  { lvl: 2, icon: "thumb", text: "South" },
  { lvl: 2, icon: "thumb", text: "West", last: true },
  { lvl: 0, icon: "legends", text: "Legends" },
  { lvl: 0, sign: "+", icon: "schedules", text: "Schedules/Quantities (all)" },
  { lvl: 0, icon: "sheets", text: "Sheets (all)" },
  { lvl: 0, sign: "+", icon: "families", text: "Families" },
  { lvl: 0, sign: "+", icon: "groups", text: "Groups" },
  { lvl: 0, icon: "link", text: "Revit Links" },
];

const viewBarIcons = [
  "crop",
  "cube",
  "sun",
  "lens",
  "cloudCrop",
  "unlockX",
  "unlockA",
  "homeTeal",
  "glasses",
  "bulb",
  "hidden",
  "analytic",
  "pipes",
  "frameTeal",
];

const statusIcons = ["pick1", "pick2", "pick3", "pick4", "pick5", "ring", "filter"];

const taskApps = [
  { name: "cortana", svg: '<circle cx="9" cy="9" r="4.500" fill="none" stroke="#fff" stroke-width="1.500"/>' },
  { name: "taskview", svg: '<rect x="5" y="5" width="6" height="8" fill="none" stroke="#ddd"/><path d="M13 4v10M3 3h10M3 15h10" stroke="#ddd"/>' },
  { name: "explorer", running: true, svg: '<path d="M2 3h6l2 2h6v10H2z" fill="#f5c33b"/><rect x="2" y="8" width="14" height="7" fill="#f9dc77"/><rect x="5" y="10" width="8" height="3" fill="#3d8ac4"/>' },
  { name: "3d", svg: '<rect x="1" y="1" width="16" height="16" fill="#1b9bc2"/><rect x="2.500" y="2.500" width="13" height="13" fill="#f2f8fb"/><text x="9" y="12.500" text-anchor="middle" font-size="9" font-family="Liberation Sans" fill="#1487ab">3D</text>' },
  { name: "store", svg: '<rect x="2" y="5" width="14" height="12" rx="1" fill="#f3f3f3"/><path d="M6 5c0-4 6-4 6 0" fill="none" stroke="#3aa0d8"/><rect x="6" y="8" width="2.500" height="2.500" fill="#e2543a"/><rect x="9.500" y="8" width="2.500" height="2.500" fill="#6cb33f"/><rect x="6" y="11.500" width="2.500" height="2.500" fill="#2e9bd6"/><rect x="9.500" y="11.500" width="2.500" height="2.500" fill="#f5b301"/>' },
  { name: "chrome", svg: '<circle cx="9" cy="9" r="8" fill="#e2453a"/><path d="M9 9L16 13A8 8 0 0 1 5 16z" fill="#f6c32f"/><path d="M9 9L5 16A8 8 0 0 1 2 5z" fill="#3aa757"/><circle cx="9" cy="9" r="3.800" fill="#fff"/><circle cx="9" cy="9" r="2.800" fill="#4285f4"/>' },
  { name: "edge", svg: '<circle cx="9" cy="9" r="8" fill="#1a8fd0"/><path d="M2 12c0-7 10-9 13-3 2 3-3 4-6 4-2 0-4-2-3-4-3 2-3 6 1 8-3 0-4-2-5-5z" fill="#3ccf8e"/><circle cx="11" cy="8" r="2" fill="#fff" opacity="0.300"/>' },
  { name: "autocad", svg: '<rect x="2" y="1" width="14" height="16" fill="#f4f0ec"/><text x="9" y="14" text-anchor="middle" font-size="13" font-weight="700" font-family="Liberation Sans" fill="#b01f24">A</text>' },
  { name: "pdf", svg: '<rect x="2" y="2" width="14" height="14" rx="2" fill="#b71c1c"/><path d="M5 13c3-2 4-5 4-8 0 3 2 5 5 6-3 0-6 0-9 2z" fill="none" stroke="#fff"/>' },
  { name: "rec", running: true, svg: '<circle cx="9" cy="9" r="7" fill="none" stroke="#d6403a" stroke-width="1.500"/><circle cx="10" cy="11" r="4.500" fill="#d6403a"/>' },
  { name: "outlook", svg: '<path d="M5 5l5-4 6 4v9l-6 3-5-3z" fill="#2f8fd8"/><rect x="1" y="7" width="8" height="8" rx="1" fill="#0f5ea8"/><circle cx="5" cy="11" r="2" fill="none" stroke="#fff"/>' },
  { name: "white", svg: '<rect x="3" y="1" width="12" height="16" fill="#fff"/><path d="M7 5h3l1 2-2 2 2 2-1 2H7z" fill="#2b5fb8"/>' },
  { name: "revit", current: true, running: true, svg: '<rect x="2" y="1" width="14" height="16" rx="1" fill="#1a5fa8"/><text x="9" y="11" text-anchor="middle" font-size="9" font-weight="700" font-family="Liberation Sans" fill="#fff">R</text>' },
];

const trayIcons = [
  '<rect x="3" y="2" width="6" height="8" rx="1" fill="none" stroke="#ddd"/><path d="M2 5h8" stroke="#ddd"/>',
  '<rect x="4" y="1" width="4" height="7" rx="2" fill="#eee"/><path d="M2 6c0 4 8 4 8 0M6 9v3" fill="none" stroke="#eee"/>',
  '<rect x="2" y="4" width="9" height="5" fill="#eee"/><path d="M0 6h2" stroke="#eee"/>',
  '<path d="M1 11L10 2v9z" fill="#777"/>',
  '<path d="M1 4.500h2l3-3v9l-3-3H1z" fill="none" stroke="#ddd"/><path d="M8 4c1 1 1 3 0 4M10 3c1.500 2 1.500 4 0 6" fill="none" stroke="#ddd"/>',
  '<path d="M2 11c2-2 3-5 6-8 2-1 3 2 0 4-2 1-4 1-3 3 1 1 4 0 5-1" fill="none" stroke="#ddd"/>',
];
</script>

<style>
html,
body {
  margin: 0;
  padding: 0;
  background: #fff;
}
</style>

<style scoped>
.app {
  width: 1280px;
  height: 720px;
  display: flex;
  flex-direction: column;
  overflow: hidden;
  font-family: Roboto, "Noto Sans", sans-serif;
  font-size: 8px;
  color: #444;
  line-height: 1;
}

.qi {
  width: 12px;
  height: 12px;
  flex: none;
}

.title-bar {
  height: 17px;
  background: #dcdcdc;
  display: flex;
  align-items: center;
  flex: none;
}

.app-btn {
  width: 13px;
  height: 16px;
  margin-left: 2px;
  background: #1a5cc4;
  color: #fff;
  font-weight: 700;
  font-size: 8px;
  display: flex;
  align-items: center;
  justify-content: center;
  border-radius: 1px;
}

.doc-ic {
  margin-left: 3px;
}

.title {
  margin-left: 703px;
  color: #444;
  padding-bottom: 5px;
}

.title-right {
  margin-left: auto;
  display: flex;
  align-items: center;
  padding-right: 1px;
}

.tiny-left,
.tiny-down {
  font-size: 7px;
  color: #444;
}

.user {
  margin-left: 3px;
  width: 54px;
}

.title-sep {
  width: 1px;
  height: 12px;
  background: #bbb;
  margin: 0 5px;
}

.help {
  width: 11px;
  height: 11px;
  border-radius: 50%;
  border: 1px solid #3a74ad;
  color: #3a74ad;
  font-weight: 700;
  display: flex;
  align-items: center;
  justify-content: center;
}

.help-caret {
  margin-left: 3px;
}

.win-btn {
  margin-left: 13px;
  width: 12px;
  font-size: 10px;
  font-weight: 700;
  height: 12px;
}

.win-ic {
  width: 12px;
  height: 12px;
  margin-left: 6px;
}

.menu-bar {
  height: 14px;
  flex: none;
  background: #dcdcdc;
  display: flex;
  align-items: stretch;
}

.menu-file {
  width: 30px;
  background: #1b72b4;
  color: #fff;
  display: flex;
  align-items: center;
  justify-content: center;
  margin-right: 1.5px;
}

.menu-item {
  padding: 0 6.5px;
  display: flex;
  align-items: center;
  color: #4a4a4a;
}

.menu-item.active {
  background: #f5f5f5;
}

.menu-ic {
  width: 16px;
  height: 10px;
  margin: 2px 0 0 11px;
}

.ribbon {
  height: 65px;
  flex: none;
  background: #f5f5f5;
  display: flex;
}

.group {
  flex: none;
  display: flex;
  flex-direction: column;
  border-right: 1px solid #e6e6e6;
  box-sizing: border-box;
}

.tools {
  height: 53px;
  display: flex;
  padding-top: 3px;
  box-sizing: border-box;
}

.tool {
  flex: none;
  height: 49px;
  box-sizing: border-box;
  display: flex;
  flex-direction: column;
  align-items: center;
  padding-top: 1px;
}

.tool.on {
  background: #dcedf5;
  outline: 1px solid #93c4dc;
  outline-offset: -1px;
}

.tool-ic {
  width: 26px;
  height: 26px;
  flex: none;
}

.tool-label {
  display: flex;
  flex-direction: column;
  align-items: center;
  white-space: nowrap;
  line-height: 10px;
}

.tool-label span {
  display: block;
}

.off,
.off .tool-label {
  color: #c6c6c6;
}

.caret {
  display: inline-block;
  width: 0;
  height: 0;
  border-left: 2px solid transparent;
  border-right: 2px solid transparent;
  border-top: 2px solid #444;
}

.caret.side {
  margin: 0 -5px 3px 1px;
}

.caret.below {
  margin-top: 3px;
}

.select-caret {
  margin-left: 5px;
  vertical-align: 1px;
  border-left-width: 3px;
  border-right-width: 3px;
  border-top-width: 3px;
}

.group-label {
  height: 12px;
  display: flex;
  align-items: center;
  justify-content: center;
  color: #555;
  white-space: pre;
}

.group-label.end {
  justify-content: flex-end;
  padding-right: 7px;
}

.group:first-child .group-label {
  justify-content: flex-start;
  padding-left: 4px;
}

.group-label.launch {
  padding-right: 8px;
}

.side-col {
  display: flex;
  flex-direction: column;
  gap: 5px;
  padding-top: 3px;
  margin-left: 2px;
  color: #444;
}

.side-row {
  height: 12px;
  display: flex;
  align-items: center;
  gap: 2px;
  white-space: nowrap;
}

.side-inline {
  margin-left: 5px;
  border-top-color: #bbb;
}

.qat {
  height: 17px;
  flex: none;
  background: #dedede;
  display: flex;
  align-items: center;
  border-bottom: 1px solid #c9c9c9;
  box-sizing: border-box;
}

.qi-on {
  background: #dcedf5;
  outline: 1px solid #93c4dc;
}

.qat-combo {
  margin-left: 3px;
  width: 135px;
  height: 12px;
  box-sizing: border-box;
  background: #e8e8e8;
  border: 1px solid #cfcfcf;
  padding-left: 3px;
  display: flex;
  align-items: center;
  justify-content: space-between;
  color: #555;
}

.combo-arrow {
  font-size: 7px;
  padding-right: 2px;
  color: #777;
}

.qat-caret {
  margin-left: 3px;
}

.qat-more {
  margin-left: 5px;
}

.view-tabs {
  height: 15px;
  flex: none;
  background: #d2d2d2;
  display: flex;
  align-items: center;
}

.view-tab {
  height: 100%;
  flex: none;
  display: flex;
  align-items: center;
  padding-left: 5px;
  box-sizing: border-box;
  gap: 3px;
  color: #555;
}

.view-tab.active {
  background: #fff;
  color: #333;
  padding-left: 7px;
}

.tab-ic {
  width: 10px;
  height: 10px;
  flex: none;
}

.tab-x {
  width: 10px;
  height: 10px;
  margin-left: auto;
  margin-right: 3px;
}

.tabs-more {
  margin-left: auto;
  margin-right: 2px;
  color: #888;
}

.canvas {
  height: 517px;
  flex: none;
  position: relative;
  background: #fff;
}

.scene {
  position: absolute;
  inset: 0;
  width: 100%;
  height: 100%;
}

.dock-tab {
  position: absolute;
  left: 2px;
  top: 115px;
  width: 6px;
  height: 49px;
  border: 1px solid #ccc;
  border-right: none;
  border-radius: 3px 0 0 3px;
  box-sizing: border-box;
  display: flex;
  align-items: center;
  color: #aaa;
}

.props,
.browser {
  position: absolute;
  background: #f5f5f5;
  box-shadow: 0 0 3px rgba(0, 0, 0, 0.4);
  display: flex;
  flex-direction: column;
}

.props {
  left: 9px;
  top: -2px;
  width: 196px;
  height: 511px;
}

.panel-head {
  height: 12px;
  flex: none;
  background: #e3e3e3;
  padding: 0 1px 0 2px;
  display: flex;
  align-items: center;
  justify-content: space-between;
  color: #444;
}

.panel-x {
  width: 10px;
  height: 10px;
}

.type-box {
  margin: 1px 0 0 3px;
  width: 190px;
  height: 46px;
  flex: none;
  box-sizing: border-box;
  border: 1px solid #dedede;
  background: #f0f0f0;
  display: flex;
  align-items: center;
}

.type-thumb {
  width: 43px;
  height: 100%;
  box-sizing: border-box;
  border-right: 1px solid #dedede;
  display: flex;
  align-items: center;
  justify-content: center;
}

.type-thumb svg {
  width: 26px;
  height: 26px;
}

.type-name {
  margin-left: 3px;
}

.type-arrow {
  margin-left: auto;
  margin-right: 4px;
  font-size: 7px;
  color: #888;
}

.type-row {
  height: 22px;
  flex: none;
  display: flex;
  align-items: center;
  padding-left: 4px;
}

.type-select {
  width: 136px;
  height: 14px;
  box-sizing: border-box;
  border-bottom: 1px solid #cfcfcf;
  display: flex;
  align-items: center;
  justify-content: space-between;
  margin-right: 3px;
}

.type-select-arrow {
  font-size: 7px;
  color: #777;
}

.edit-type {
  margin-left: 3px;
}

.prop-body {
  flex: 1;
  display: flex;
  min-height: 0;
  overflow: hidden;
}

.prop-table {
  width: 181px;
  margin-left: 1px;
  flex: none;
  overflow: hidden;
  background: #fff;
}

.prop-group {
  height: 12px;
  background: #f1f1f1;
  padding: 0 4px 0 2px;
  display: flex;
  align-items: center;
  justify-content: space-between;
}

.collapse {
  width: 6px;
  height: 7px;
}

.prop-row {
  height: 12px;
  display: flex;
  align-items: center;
  white-space: nowrap;
  background: #fff;
}

.prop-label {
  width: 87px;
  flex: none;
  padding-left: 6px;
  box-sizing: border-box;
  overflow: hidden;
}

.prop-label em {
  font-style: normal;
  margin-left: 9px;
}

.prop-value {
  padding-left: 1px;
  flex: 1;
  display: flex;
  align-items: center;
  height: 100%;
}

.edit-btn {
  width: 85px;
  height: 9px;
  box-sizing: border-box;
  background: #f0f0f0;
  border: 1px solid #c8c8c8;
  display: flex;
  align-items: center;
  justify-content: center;
}

.prop-input {
  width: 85px;
  height: 11px;
  box-sizing: border-box;
  background: #fff;
  border: 1px solid #444;
  display: flex;
  align-items: center;
  padding-left: 2px;
}

.check {
  display: block;
  width: 7px;
  height: 7px;
  margin-left: 1px;
  background: #fff;
  border: 1px solid #999;
}

.off .check {
  border-color: #ddd;
}

.prop-scroll {
  width: 12px;
  flex: none;
  margin-left: 1px;
  position: relative;
  background: #f0f0f0;
}

.chev {
  position: absolute;
  left: 50%;
  width: 4px;
  height: 4px;
  margin-left: -3px;
  border-left: 1px solid #999;
  border-top: 1px solid #999;
}

.chev.up {
  top: 5px;
  transform: rotate(45deg);
}

.chev.down {
  bottom: 5px;
  transform: rotate(225deg);
}

.prop-grip {
  position: absolute;
  top: 13px;
  left: 3px;
  width: 6px;
  height: 361px;
  background: #dcdcdc;
}

.prop-foot {
  height: 17px;
  flex: none;
  display: flex;
  align-items: center;
  padding-left: 4px;
  background: #f0f0f0;
}

.qi-sel {
  background: #8ccbec;
  outline: 1px solid #6aaed6;
}

.foot-ic {
  margin-left: 5px;
}

.apply {
  margin-left: auto;
  margin-right: 4px;
  width: 46px;
  height: 12px;
  box-sizing: border-box;
  border: 1px solid #dcdcdc;
  color: #aaa;
  display: flex;
  align-items: center;
  justify-content: center;
}

.browser {
  left: 1066px;
  top: 8px;
  width: 196px;
  height: 484px;
  background: #fff;
}

.search {
  margin: 6px 8px 5.5px;
  height: 17px;
  flex: none;
  box-sizing: border-box;
  border: 1px solid #ececec;
  display: flex;
  align-items: center;
  padding-left: 5px;
  color: #aaa;
  gap: 4px;
}

.search svg {
  width: 12px;
  height: 12px;
}

.tree {
  display: flex;
  flex-direction: column;
  color: #555;
}

.tree-row {
  height: 13.33px;
  display: flex;
  align-items: center;
  position: relative;
  white-space: nowrap;
}

.tree-row.hi {
  background: #efefef;
}

.tree-row.bold {
  font-weight: 700;
}

.sign {
  position: absolute;
  top: 1px;
  width: 10px;
  text-align: center;
  font-size: 10px;
  color: #555;
}

.lvl0 {
  padding-left: 16px;
}

.lvl0 .sign {
  left: 3px;
}

.lvl1 {
  padding-left: 27px;
}

.lvl1 .sign {
  left: 14px;
}

.lvl2 {
  padding-left: 38px;
}

.tree-ic {
  width: 11px;
  height: 11px;
  flex: none;
  margin-right: 2px;
}

.tree-dots {
  position: absolute;
  left: 24px;
  top: 0;
  width: 13px;
  height: 7px;
  border-left: 1px dotted #bbb;
  border-bottom: 1px dotted #bbb;
}

.v-scroll {
  position: absolute;
  right: 0;
  top: 0;
  bottom: 0;
  width: 11px;
  background: #fff;
}

.v-grip {
  position: absolute;
  left: 3px;
  top: 255px;
  width: 5px;
  height: 14px;
  background: #e2e2e2;
}

.view-bar {
  height: 13px;
  flex: none;
  margin-top: 2px;
  background: #e6e6e6;
  display: flex;
  align-items: center;
  position: relative;
}

.view-scale {
  margin-left: 20px;
  width: 35px;
}

.view-icons {
  display: flex;
  align-items: center;
  gap: 5.400px;
  background: #f2f2f2;
  height: 100%;
  padding-right: 2px;
}

.h-arrow {
  font-size: 10px;
  color: #888;
}

.h-grip {
  position: absolute;
  left: 776px;
  top: 5px;
  width: 12px;
  height: 3px;
  background: #cfcfcf;
}

.h-right {
  position: absolute;
  left: 1262px;
  font-size: 10px;
  color: #666;
}

.status {
  height: 32px;
  flex: none;
  background: #f5f5f5;
  margin-top: 1px;
  display: flex;
  align-items: flex-end;
  box-sizing: border-box;
  position: relative;
  color: #555;
}

.status-text {
  margin: 0 0 2px 1px;
}

.status-net {
  margin-left: 515px;
}

.status-mid {
  display: flex;
  align-items: center;
  margin-left: 145px;
  color: #bbb;
}

.mid-caret {
  font-size: 7px;
  width: 4px;
}

.count {
  margin-left: 1px;
  color: #aaa;
}

.mid-a {
  margin-left: 15px;
}

.mid-b {
  margin-left: 5px;
}

.main-model {
  margin-left: 7px;
  color: #aaa;
}

.model-caret {
  margin-left: 87px;
}

.status-right {
  position: absolute;
  right: 45px;
  bottom: 0;
  display: flex;
  align-items: center;
  gap: 5.500px;
}

.filter-count {
  margin-left: -6px;
  color: #555;
}

.taskbar {
  height: 28px;
  flex: none;
  background: #1f2b33;
  display: flex;
  align-items: stretch;
  color: #eee;
}

.start {
  width: 32px;
  display: flex;
  align-items: center;
  justify-content: center;
}

.start svg {
  width: 11px;
  height: 11px;
}

.task-search {
  width: 192px;
  background: #f2f2f2;
  color: #333;
  font-size: 10px;
  display: flex;
  align-items: center;
  padding-left: 8px;
  box-sizing: border-box;
  position: relative;
}

.task-glass {
  width: 12px;
  height: 12px;
  margin-right: 6px;
}

.sparkle {
  position: absolute;
  right: 8px;
  top: 2px;
  width: 40px;
  height: 24px;
}

.task-apps {
  display: flex;
}

.task-app {
  width: 32.7px;
  display: flex;
  align-items: center;
  justify-content: center;
  box-sizing: border-box;
  border-bottom: 2px solid transparent;
}

.task-app svg {
  width: 16px;
  height: 16px;
}

.task-app.running {
  border-bottom-color: #d9c9a8;
}

.task-app.current {
  background: #3a4d5e;
}

.tray {
  margin-left: auto;
  display: flex;
  align-items: center;
  color: #e6e6e6;
}

.weather {
  width: 14px;
  height: 17px;
}

.temp {
  font-size: 9.5px;
  margin-left: 6px;
  color: #eee;
}

.tray-ic {
  width: 11px;
  height: 11px;
  margin-left: 5.500px;
}

.tray-ic.first {
  margin-left: 16px;
}

.lang {
  margin-left: 9px;
}

.clock {
  margin-left: 4px;
  display: flex;
  flex-direction: column;
  align-items: center;
  gap: 4px;
}

.notify {
  width: 12px;
  height: 12px;
  margin: 0 15px 0 13px;
}
</style>
